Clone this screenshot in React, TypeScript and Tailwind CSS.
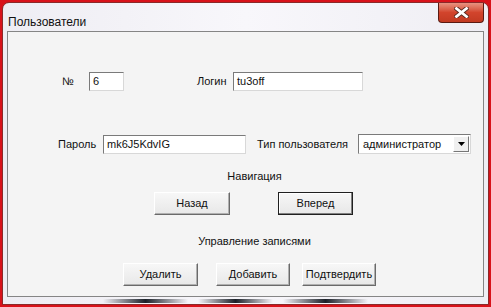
import React from "react";

const font = { fontFamily: '"Liberation Sans", Arial, sans-serif' };

function Btn({ children, w, def }: { children: React.ReactNode; w: string; def?: boolean }) {
  return (
    <div
      className={`${w} h-[23px] flex items-center justify-center text-[11px] text-[#111] bg-gradient-to-b from-[#f7f7f7] to-[#e8e8e8] border ${
        def ? "border-[#202020] shadow-[inset_-1px_-1px_0_#808080,inset_1px_1px_0_#fff]" : "border-t-[#fff] border-l-[#fff] border-r-[#6a6a6a] border-b-[#6a6a6a] shadow-[inset_-1px_-1px_0_#b0b0b0]"
      }`}
    >
      {children}
    </div>
  );
}

function Field({ w, children }: { w: string; children?: React.ReactNode }) {
  return (
    <div className={`${w} h-[19px] bg-white border border-t-[#7a7a7a] border-l-[#7a7a7a] border-r-[#d8d8d8] border-b-[#d8d8d8] flex items-center pl-[3px] text-[11px] text-[#111]`}>
      {children}
    </div>
  );
}

export default function App() {
  return (
    <div style={font} className="w-[491px] h-[307px] bg-[#d8121a] pt-[2px] px-[2px] pb-[2px] overflow-hidden">
      <div className="relative w-full h-full rounded-t-[7px] bg-gradient-to-r from-[#eeedf3] via-[#f8f7fb] to-[#efeef4] border border-[#8a2a2a] flex flex-col">
        <div className="h-[28px] flex items-start justify-between pl-[5px] pr-[4px]">
          <div className="text-[12px] text-[#111] mt-[10px]">Пользователи</div>
          <div className="w-[46px] h-[20px] rounded-b-[4px] border border-[#5a1a12] border-t-0 bg-gradient-to-b from-[#e89280] via-[#d2442c] to-[#c23a22] flex items-center justify-center">
            <svg width="15" height="11" viewBox="0 0 15 11">
              <path d="M2.5 1.5 L12.5 9.5 M12.5 1.5 L2.5 9.5" stroke="#5a2a20" strokeWidth="4.5" strokeLinecap="square" />
              <path d="M2.5 1.5 L12.5 9.5 M12.5 1.5 L2.5 9.5" stroke="#ffffff" strokeWidth="2.8" strokeLinecap="square" />
            </svg>
          </div>
        </div>
        <div className="mx-[4px] h-[266px] bg-[#f4f4f4] border border-[#858585] text-[11px] text-[#111]">
          <div className="flex items-center mt-[40px] h-[19px]">
            <span className="ml-[54px] w-[27px]">№</span>
            <Field w="w-[35px]">6</Field>
            <span className="ml-[73px] w-[36px]">Логин</span>
            <Field w="w-[130px]">tu3off</Field>
          </div>
          <div className="flex items-center mt-[43px] h-[20px]">
            <span className="ml-[50px] w-[45px]">Пароль</span>
            <Field w="w-[143px]">mk6J5KdvIG</Field>
            <span className="ml-[11px] w-[101px]">Тип пользователя</span>
            <div className="w-[113px] h-[20px] bg-white border border-t-[#7a7a7a] border-l-[#7a7a7a] border-r-[#d8d8d8] border-b-[#d8d8d8] flex items-center justify-between pl-[4px] pr-[1px]">
              <span>администратор</span>
              <div className="w-[16px] h-[16px] bg-[#f0f0f0] border border-t-[#fff] border-l-[#fff] border-r-[#777] border-b-[#777] flex items-center justify-center">
                <svg width="7" height="4" viewBox="0 0 7 4"><path d="M0 0 H7 L3.5 4 Z" fill="#000" /></svg>
              </div>
            </div>
          </div>
          <div className="text-center mt-[16px] h-[13px] leading-[13px] pl-[18px]">Навигация</div>
          <div className="flex mt-[9px]">
            <div className="ml-[146px]"><Btn w="w-[76px]">Назад</Btn></div>
            <div className="ml-[48px]"><Btn w="w-[75px]" def>Вперед</Btn></div>
          </div>
          <div className="text-center mt-[20px] h-[13px] leading-[13px] pl-[18px]">Управление записями</div>
          <div className="flex mt-[15px]">
            <div className="ml-[115px]"><Btn w="w-[75px]">Удалить</Btn></div>
            <div className="ml-[18px]"><Btn w="w-[74px]">Добавить</Btn></div>
            <div className="ml-[12px]"><Btn w="w-[74px]">Подтвердить</Btn></div>
          </div>
        </div>
        <div className="flex-1 flex items-center px-[100px]">
          <div className="h-[4px] w-[85px] bg-gradient-to-r from-transparent via-[#1a2028] to-transparent" />
          <div className="h-[4px] w-[75px] ml-[10px] bg-gradient-to-r from-transparent via-[#1a2028] to-transparent" />
          <div className="h-[4px] w-[85px] ml-[10px] bg-gradient-to-r from-transparent via-[#1a2028] to-transparent" />
        </div>
      </div>
    </div>
  );
}
